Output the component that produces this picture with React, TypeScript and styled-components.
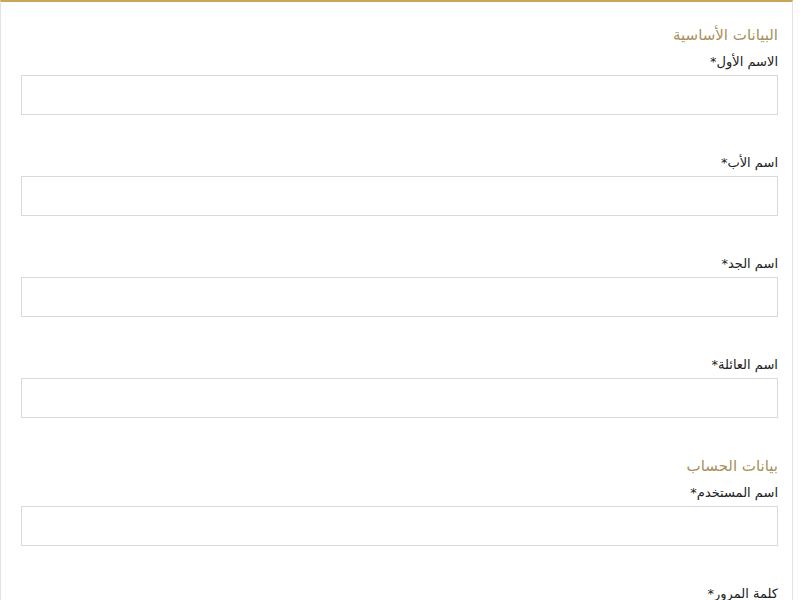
import React from "react";
import styled, { createGlobalStyle } from "styled-components";

const GlobalStyle = createGlobalStyle`
  html, body {
    margin: 0;
    padding: 0;
    background: #ffffff;
  }
  body {
    font-family: "DejaVu Sans", "Noto Sans", sans-serif;
  }
`;

const Card = styled.form`
  width: 793px;
  box-sizing: border-box;
  direction: rtl;
  background: #ffffff;
  border-top: 2px solid #c9a758;
  border-left: 1px solid #e4e4e4;
  border-right: 1px solid #e4e4e4;
  padding: 23px 14px 0 20px;
  min-height: 600px;
`;

const SectionTitle = styled.h3`
  margin: 0 0 7px;
  font-size: 15px;
  line-height: 20px;
  font-weight: normal;
  color: #a8905c;
`;

const Field = styled.div`
  margin-bottom: 38px;
`;

const Label = styled.label`
  display: block;
  margin-bottom: 3px;
  font-size: 13px;
  line-height: 20px;
  color: #222222;
`;

const Input = styled.input`
  display: block;
  width: 100%;
  height: 40px;
  box-sizing: border-box;
  border: 1px solid #d9d9d9;
  border-radius: 0;
  background: #ffffff;
  padding: 0 10px;
  font-size: 13px;
  font-family: inherit;
  outline: none;
`;

type Section = { title: string; fields: { label: string; type?: string }[] };

const sections: Section[] = [
  {
    title: "البيانات الأساسية",
    fields: [
      { label: "الاسم الأول" },
      { label: "اسم الأب" },
      { label: "اسم الجد" },
      { label: "اسم العائلة" },
    ],
  },
  {
    title: "بيانات الحساب",
    fields: [
      { label: "اسم المستخدم" },
      { label: "كلمة المرور", type: "password" },
    ],
  },
];

const App = () => {
  return (
    <>
      <GlobalStyle />
      <Card onSubmit={(e) => e.preventDefault()}>
        {sections.map((section) => (
          <div key={section.title}>
            <SectionTitle>{section.title}</SectionTitle>
            {section.fields.map((field) => (
              <Field key={field.label}>
                <Label>{field.label}*</Label>
                <Input type={field.type ?? "text"} />
              </Field>
            ))}
          </div>
        ))}
      </Card>
    </>
  );
};

export default App;
